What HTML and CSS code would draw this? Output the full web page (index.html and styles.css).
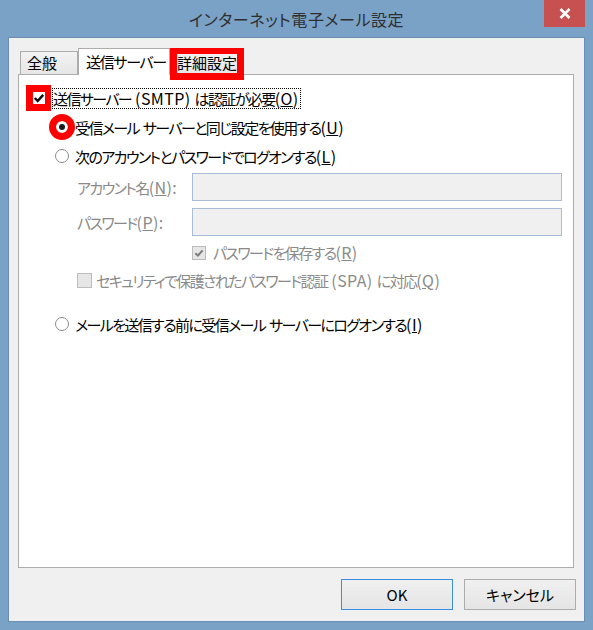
FILE: index.html
```html
<!DOCTYPE html>
<html>
<head>
    <title>インターネット電子メール設定</title>
    <link rel="stylesheet" href="styles.css">
</head>
<body>
    <div class="window">
        <div class="titlebar">
            <span class="title">インターネット電子メール設定</span>
            <span class="close">
                <svg width="12" height="11" viewBox="0 0 12 11"><path d="M1.5 1 L10.5 10 M10.5 1 L1.5 10" stroke="#fff" stroke-width="2.6" fill="none"/></svg>
            </span>
        </div>

        <div class="client">
            <div class="tabs">
                <div class="tab">全般</div>
                <div class="tab active">送信サーバー</div>
                <div class="tab marked">詳細設定</div>
            </div>

            <div class="panel">
                <div class="row r-auth">
                    <span class="mark-box">
                        <span class="check-white">
                            <svg width="12" height="12" viewBox="0 0 12 12"><path d="M1.8 6 L4.7 9 L10.2 2.8" stroke="#111" stroke-width="2.5" fill="none"/></svg>
                        </span>
                    </span>
                    <span class="focus">送信サーバー<span class="lat"> (SMTP) </span>は認証が必要<span class="lat">(<u>O</u>)</span></span>
                </div>

                <div class="row r-same">
                    <span class="radio checked ringed"></span>
                    <span class="label">受信メール<span class="lat"> </span>サーバーと同じ設定を使用する<span class="lat">(<u>U</u>)</span></span>
                </div>

                <div class="row r-logon">
                    <span class="radio"></span>
                    <span class="label">次のアカウントとパスワードでログオンする<span class="lat">(<u>L</u>)</span></span>
                </div>

                <div class="row r-field r-account">
                    <span class="field-label">アカウント名<span class="lat">(<u>N</u>):</span></span>
                    <span class="input"></span>
                </div>

                <div class="row r-field r-password">
                    <span class="field-label">パスワード<span class="lat">(<u>P</u>):</span></span>
                    <span class="input"></span>
                </div>

                <div class="row r-save">
                    <span class="checkbox disabled">
                        <svg width="12" height="12" viewBox="0 0 12 12"><path d="M2.4 6.2 L4.9 8.6 L9.6 3.4" stroke="#7a7a7a" stroke-width="2" fill="none"/></svg>
                    </span>
                    <span class="dim">パスワードを保存する<span class="lat">(<u>R</u>)</span></span>
                </div>

                <div class="row r-spa">
                    <span class="checkbox disabled"></span>
                    <span class="dim">セキュリティで保護されたパスワード認証<span class="lat"> (SPA) </span>に対応<span class="lat">(<u>Q</u>)</span></span>
                </div>

                <div class="row r-before">
                    <span class="radio"></span>
                    <span class="label">メールを送信する前に受信メール<span class="lat"> </span>サーバーにログオンする<span class="lat">(<u>I</u>)</span></span>
                </div>
            </div>

            <div class="buttons">
                <button class="btn default">OK</button>
                <button class="btn">キャンセル</button>
            </div>
        </div>
    </div>
</body>
</html>
```

FILE: styles.css
```css
body {
    margin: 0;
    font-family: "Noto Sans CJK JP", "Noto Sans", sans-serif;
    font-feature-settings: "palt";
    font-size: 15px;
    color: #000;
}
.window {
    width: 593px;
    height: 630px;
    background: #7aa1c6;
    display: flex;
    flex-direction: column;
}

/* title bar */
.titlebar {
    height: 37px;
    position: relative;
    display: flex;
    align-items: center;
    justify-content: center;
}
.title {
    font-size: 16px;
    letter-spacing: 0.6px;
    color: #2f2f2f;
    line-height: 20px;
}
.close {
    position: absolute;
    top: 0;
    right: 8px;
    width: 41px;
    height: 27px;
    background: #c75050;
    display: flex;
    align-items: center;
    justify-content: center;
}

/* client area */
.client {
    flex: 1;
    margin: 0 8px 8px;
    border: 1px solid #6a8db2;
    background: #f0f0f0;
    display: flex;
    flex-direction: column;
}

.tabs {
    display: flex;
    align-items: flex-end;
    height: 37px;
    padding-left: 11px;
    margin-bottom: -1px;
    position: relative;
    z-index: 1;
    box-sizing: border-box;
}
.tab {
    box-sizing: border-box;
    height: 23px;
    margin-bottom: 1px;
    border: 1px solid #acacac;
    border-bottom: none;
    background: linear-gradient(#f2f2f2, #e6e6e6);
    line-height: 21px;
    padding-left: 6px;
    position: relative;
    white-space: nowrap;
}
.tab:first-child { width: 58px; }
.tab.active {
    width: 92px;
    height: 27px;
    margin-bottom: 0;
    background: #fff;
    padding-left: 7px;
    line-height: 25px;
    letter-spacing: -1.3px;
}
.tab.marked {
    width: 74px;
    border-left: none;
    padding-left: 7px;
}
.tab.marked::after {
    content: "";
    position: absolute;
    left: 0;
    right: -1px;
    top: -4px;
    bottom: -6px;
    border-style: solid;
    border-color: #ff0000;
    border-width: 6px 7px 7px 7px;
}

.panel {
    margin: 0 10px 0 9px;
    height: 494px;
    box-sizing: border-box;
    border: 1px solid #adadad;
    background: #fff;
    padding-top: 9px;
    letter-spacing: -1.6px;
}
.lat {
    font-size: 16px;
    letter-spacing: 0.4px;
    white-space: pre;
}

.row {
    display: flex;
    align-items: center;
    line-height: 20px;
    white-space: nowrap;
}
.r-auth { height: 28px; padding-left: 7px; }
.r-same { height: 30px; padding-left: 36px; }
.r-logon { height: 28px; padding-left: 36px; }
.r-account { height: 28px; margin-top: 3px; }
.r-password { height: 28px; margin-top: 7px; }
.r-save { height: 29px; margin-top: 2px; padding-left: 173px; }
.r-spa { height: 27px; padding-left: 58px; }
.r-before { height: 28px; margin-top: 16px; padding-left: 36px; }

.mark-box {
    box-sizing: border-box;
    width: 25px;
    height: 26px;
    background: #ff0000;
    padding: 7px 6px 7px 7px;
}
.check-white {
    display: block;
    width: 12px;
    height: 12px;
    background: #fff;
}
.check-white svg { display: block; }
.focus {
    margin-left: 1px;
    border: 1px dotted #000;
    padding: 0 1px 0 0;
    line-height: 19px;
}

.radio {
    position: relative;
    box-sizing: border-box;
    width: 14px;
    height: 14px;
    border: 1px solid #8c8c8c;
    border-radius: 50%;
    background: #fff;
    margin-right: 6px;
    flex: none;
}
.radio.checked::after {
    content: "";
    position: absolute;
    left: 3px;
    top: 3px;
    width: 6px;
    height: 6px;
    border-radius: 50%;
    background: #1a1a1a;
}
.radio.ringed::before {
    content: "";
    position: absolute;
    left: -7px;
    top: -7px;
    width: 26px;
    height: 26px;
    box-sizing: border-box;
    border: 7px solid #ff0000;
    border-radius: 50%;
}

.field-label {
    width: 115px;
    margin-left: 58px;
    color: #8a8a8a;
}
.input {
    box-sizing: border-box;
    width: 370px;
    height: 28px;
    border: 1px solid #a9bed6;
    background: #f0f0f0;
}

.checkbox {
    box-sizing: border-box;
    width: 14px;
    height: 14px;
    border: 1px solid #bcbcbc;
    background: #e6e6e6;
    flex: none;
}
.checkbox svg { display: block; margin: 0; }
.r-save .checkbox { margin-right: 7px; }
.r-spa .checkbox { width: 15px; height: 15px; margin-right: 4px; }
.dim { color: #8a8a8a; }

.buttons {
    display: flex;
    justify-content: flex-end;
    gap: 11px;
    margin-top: 11px;
    padding-right: 8px;
}
.btn {
    box-sizing: border-box;
    width: 112px;
    height: 31px;
    border: 1px solid #acacac;
    background: linear-gradient(#f0f0f0, #e5e5e5);
    font-family: inherit;
    font-feature-settings: "palt";
    font-size: 15px;
    color: #000;
    padding: 0;
}
.btn.default { border-color: #3c8ee2; }
```
